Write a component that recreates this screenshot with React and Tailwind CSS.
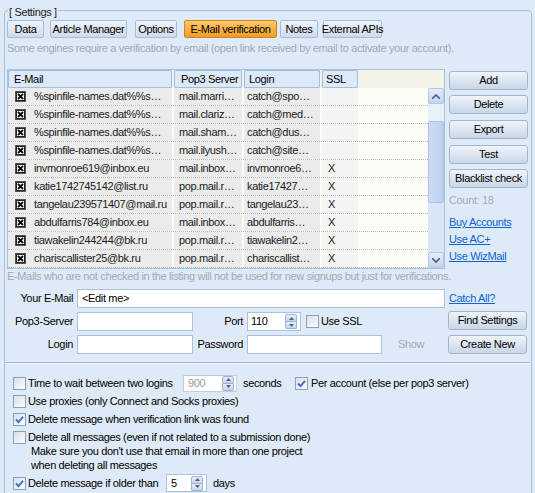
import React from "react";

const rows = [
  ["%spinfile-names.dat%%s…", "mail.marri…", "catch@spo…", ""],
  ["%spinfile-names.dat%%s…", "mail.clariz…", "catch@med…", ""],
  ["%spinfile-names.dat%%s…", "mail.sham…", "catch@dus…", ""],
  ["%spinfile-names.dat%%s…", "mail.ilyush…", "catch@site…", ""],
  ["invmonroe619@inbox.eu", "mail.inbox…", "invmonroe6…", "X"],
  ["katie1742745142@list.ru", "pop.mail.r…", "katie17427…", "X"],
  ["tangelau239571407@mail.ru", "pop.mail.r…", "tangelau23…", "X"],
  ["abdulfarris784@inbox.eu", "mail.inbox…", "abdulfarris…", "X"],
  ["tiawakelin244244@bk.ru", "pop.mail.r…", "tiawakelin2…", "X"],
  ["chariscallister25@bk.ru", "pop.mail.r…", "chariscallist…", "X"],
];

function Tab({ children, className = "", active = false }) {
  return (
    <div
      className={
        "h-[18px] flex items-center justify-center whitespace-nowrap rounded-[2px] border " +
        (active
          ? "border-[#c98522] bg-gradient-to-b from-[#fcc867] to-[#f29c22] "
          : "border-[#a9bcd6] bg-gradient-to-b from-[#eef3fa] to-[#cfdbeb] ") +
        className
      }
    >
      {children}
    </div>
  );
}

function Btn({ children, className = "" }) {
  return (
    <div
      className={
        "h-[19px] w-[79px] flex items-center justify-center whitespace-nowrap rounded-[3px] border border-[#a3b5cd] bg-gradient-to-b from-[#f0f4fa] to-[#c9d6e7] " +
        className
      }
    >
      {children}
    </div>
  );
}

function RowCheck() {
  return (
    <svg width="11" height="11" viewBox="0 0 11 11" className="shrink-0">
      <rect x="0.5" y="0.5" width="10" height="10" fill="#fff" stroke="#555" />
      <rect x="1.5" y="1.5" width="8" height="8" fill="#fff" stroke="#222" />
      <path d="M3 3 L8 8 M8 3 L3 8" stroke="#000" strokeWidth="1.8" />
    </svg>
  );
}

function XpCheck({ checked = false, className = "" }) {
  return (
    <div
      className={
        "w-[13px] h-[13px] shrink-0 border border-[#8c9fb8] bg-gradient-to-br from-[#d9dfe7] to-[#fdfdfd] flex items-center justify-center " +
        className
      }
    >
      {checked && (
        <svg width="9" height="9" viewBox="0 0 9 9">
          <path d="M1 4.5 L3.5 7 L8 1.8" fill="none" stroke="#3470cc" strokeWidth="1.9" />
        </svg>
      )}
    </div>
  );
}

function Spinner({ className = "" }) {
  return (
    <div className={"flex flex-col w-[12px] h-[15px] " + className}>
      <div className="flex-1 flex items-center justify-center border border-[#9db3d3] bg-gradient-to-b from-[#e7eefa] to-[#c5d5ee] rounded-t-[2px]">
        <svg width="5" height="3" viewBox="0 0 5 3">
          <path d="M0 3 L2.5 0 L5 3Z" fill="#4d6185" />
        </svg>
      </div>
      <div className="flex-1 flex items-center justify-center border border-t-0 border-[#9db3d3] bg-gradient-to-b from-[#e7eefa] to-[#c5d5ee] rounded-b-[2px]">
        <svg width="5" height="3" viewBox="0 0 5 3">
          <path d="M0 0 L2.5 3 L5 0Z" fill="#4d6185" />
        </svg>
      </div>
    </div>
  );
}

function ScrollArrow({ up }) {
  return (
    <div className="h-[16px] w-[16px] flex items-center justify-center border border-[#b4c8e6] bg-gradient-to-b from-[#e4ecf8] to-[#c4d4ee] rounded-[2px]">
      <svg width="8" height="5" viewBox="0 0 8 5">
        {up ? (
          <path d="M0 5 L4 1 L8 5" fill="none" stroke="#4d6185" strokeWidth="1.6" />
        ) : (
          <path d="M0 0 L4 4 L8 0" fill="none" stroke="#4d6185" strokeWidth="1.6" />
        )}
      </svg>
    </div>
  );
}

export default function App() {
  return (
    <div className="w-[535px] h-[493px] overflow-hidden whitespace-nowrap bg-[#dfeaf8] font-['Liberation_Sans',Arial,sans-serif] text-[11px] tracking-[-0.35px] text-black leading-none">
      <div className="pt-[10px] pl-[4px] pr-[3px]">
        <div className="relative border border-[#a7c0de] rounded-[4px] h-[495px] pl-[2px] pt-[9px]">
          <span className="absolute top-[-5px] left-[3px] bg-[#dfeaf8] px-[1px] leading-[12px] text-[#222]">
            [ Settings ]
          </span>

          {/* tabs */}
          <div className="flex">
            <Tab className="w-[37px]">Data</Tab>
            <Tab className="ml-[6px] w-[77px]">Article Manager</Tab>
            <Tab className="ml-[8px] w-[42px]">Options</Tab>
            <Tab active className="ml-[7px] w-[93px]">E-Mail verification</Tab>
            <Tab className="ml-[3px] w-[38px]">Notes</Tab>
            <Tab className="ml-[5px] w-[59px]">External APIs</Tab>
          </div>

          <div className="mt-[4px] leading-[12px] text-[#a1a9b4]">
            Some engines require a verification by email (open link received by email to activate your account).
          </div>

          {/* table + right buttons */}
          <div className="mt-[15px] flex">
            <div className="w-[438px] h-[200px] border border-[#a9c3df] bg-[#fbfcf6]">
              <div className="flex h-[18px] bg-[#f4f3ea]">
                <div className="w-[164px] border border-[#9fbfe1] bg-[#dde9f8] flex items-center pl-[5px] rounded-[1px]">E-Mail</div>
                <div className="ml-[2px] w-[68px] border border-[#9fbfe1] bg-[#dde9f8] flex items-center pl-[6px] rounded-[1px]">Pop3 Server</div>
                <div className="ml-[2px] w-[76px] border border-[#9fbfe1] bg-[#dde9f8] flex items-center pl-[4px] rounded-[1px]">Login</div>
                <div className="ml-[2px] w-[36px] border border-[#9fbfe1] bg-[#dde9f8] flex items-center pl-[3px] rounded-[1px]">SSL</div>
              </div>
              <div className="flex">
                <div className="w-[420px]">
                  {rows.map((r, i) => (
                    <div key={i} className="flex h-[18px] border-b border-dotted border-[#b9b9b9] text-[#1a1a1a]">
                      <div className="w-[164px] bg-[#ebebeb] flex items-center pl-[7px]">
                        <RowCheck />
                        <span className="ml-[8px]">{r[0]}</span>
                      </div>
                      <div className="ml-[2px] w-[68px] bg-[#ebebeb] flex items-center pl-[5px] overflow-hidden">{r[1]}</div>
                      <div className="ml-[2px] w-[76px] bg-[#ebebeb] flex items-center pl-[3px] overflow-hidden">{r[2]}</div>
                      <div className="ml-[2px] w-[36px] bg-[#f3f3f3] flex items-center pl-[6px]">{r[3]}</div>
                    </div>
                  ))}
                </div>
                <div className="w-[16px] h-[180px] flex flex-col bg-[#e3ebf8]">
                  <ScrollArrow up />
                  <div className="h-[17px] bg-[#eaf0fa]" />
                  <div className="h-[82px] border border-[#abc2e6] bg-gradient-to-r from-[#cddcf3] to-[#bccfee] rounded-[2px]" />
                  <div className="flex-1 bg-[#dae5f6]" />
                  <ScrollArrow />
                </div>
              </div>
            </div>

            <div className="ml-[4px] w-[79px] pt-[2px] flex flex-col">
              <Btn>Add</Btn>
              <Btn className="mt-[5px]">Delete</Btn>
              <Btn className="mt-[6px]">Export</Btn>
              <Btn className="mt-[6px]">Test</Btn>
              <Btn className="mt-[5px]">Blacklist check</Btn>
              <div className="mt-[6px] leading-[12px] text-[#a3abb6]">Count: 18</div>
              <div className="mt-[10px] leading-[12px] text-[#0a64d0] underline">Buy Accounts</div>
              <div className="mt-[5px] leading-[12px] text-[#0a64d0] underline">Use AC+</div>
              <div className="mt-[5px] leading-[12px] text-[#0a64d0] underline">Use WizMail</div>
            </div>
          </div>

          <div className="mt-[1px] leading-[12px] text-[#a1a9b4]">
            E-Mails who are not checked in the listing will not be used for new signups but just for verifications.
          </div>

          {/* form */}
          <div className="mt-[7px] flex">
            <div className="w-[441px]">
              <div className="flex items-center h-[19px]">
                <div className="w-[66px] text-right">Your E-Mail</div>
                <div className="ml-[4px] w-[368px] h-[19px] border border-[#a9c2df] bg-white flex items-center pl-[4px]">&lt;Edit me&gt;</div>
              </div>
              <div className="mt-[4px] flex items-center h-[19px]">
                <div className="w-[66px] text-right">Pop3-Server</div>
                <div className="ml-[4px] w-[116px] h-[19px] border border-[#a9c2df] bg-white" />
                <div className="w-[50px] text-right">Port</div>
                <div className="ml-[4px] w-[54px] h-[19px] border border-[#a9c2df] bg-white flex items-center pl-[3px]">
                  <span className="flex-1">110</span>
                  <Spinner className="mr-[3px]" />
                </div>
                <XpCheck className="ml-[5px]" />
                <span className="ml-[2px]">Use SSL</span>
              </div>
              <div className="mt-[4px] flex items-center h-[19px]">
                <div className="w-[66px] text-right">Login</div>
                <div className="ml-[4px] w-[116px] h-[19px] border border-[#a9c2df] bg-white" />
                <div className="w-[50px] text-right">Password</div>
                <div className="ml-[4px] w-[135px] h-[19px] border border-[#a9c2df] bg-white" />
                <span className="ml-[16px] text-[#a1a9b4]">Show</span>
              </div>
            </div>
            <div className="w-[80px] flex flex-col">
              <div className="h-[19px] flex items-center pl-[1px] text-[#0a64d0] underline">Catch All?</div>
              <Btn className="mt-[3px]">Find Settings</Btn>
              <Btn className="mt-[5px]">Create New</Btn>
            </div>
          </div>

          <div className="mt-[8px] mr-[1px] ml-[-2px] border-t border-[#a2b8d4]" />
          <div className="mr-[1px] ml-[-2px] border-t border-[#f4f8fd]" />

          {/* options */}
          <div className="mt-[10px] pl-[6px]">
            <div className="flex items-center h-[18px]">
              <XpCheck />
              <span className="ml-[2px] w-[155px]">Time to wait between two logins</span>
              <div className="w-[54px] h-[17px] border border-[#c3cddb] bg-white flex items-center pl-[4px] text-[#9a9a9a]">
                <span className="flex-1">900</span>
                <Spinner className="mr-[2px]" />
              </div>
              <span className="ml-[6px] w-[52px]">seconds</span>
              <XpCheck checked />
              <span className="ml-[3px]">Per account (else per pop3 server)</span>
            </div>
            <div className="flex items-center h-[18px]">
              <XpCheck />
              <span className="ml-[2px]">Use proxies (only Connect and Socks proxies)</span>
            </div>
            <div className="flex items-center h-[18px]">
              <XpCheck checked />
              <span className="ml-[2px]">Delete message when verification link was found</span>
            </div>
            <div className="flex items-center h-[18px]">
              <XpCheck />
              <span className="ml-[2px]">Delete all messages (even if not related to a submission done)</span>
            </div>
            <div className="mt-[-2px] pl-[18px] leading-[14px]">
              <div>Make sure you don't use that email in more than one project</div>
              <div>when deleting all messages</div>
            </div>
            <div className="mt-[2px] flex items-center h-[18px]">
              <XpCheck checked />
              <span className="ml-[2px] w-[138px]">Delete message if older than</span>
              <div className="w-[41px] h-[18px] border border-[#a9c2df] bg-white flex items-center pl-[4px]">
                <span className="flex-1">5</span>
                <Spinner className="mr-[3px]" />
              </div>
              <span className="ml-[6px]">days</span>
            </div>
          </div>
        </div>
      </div>
    </div>
  );
}
